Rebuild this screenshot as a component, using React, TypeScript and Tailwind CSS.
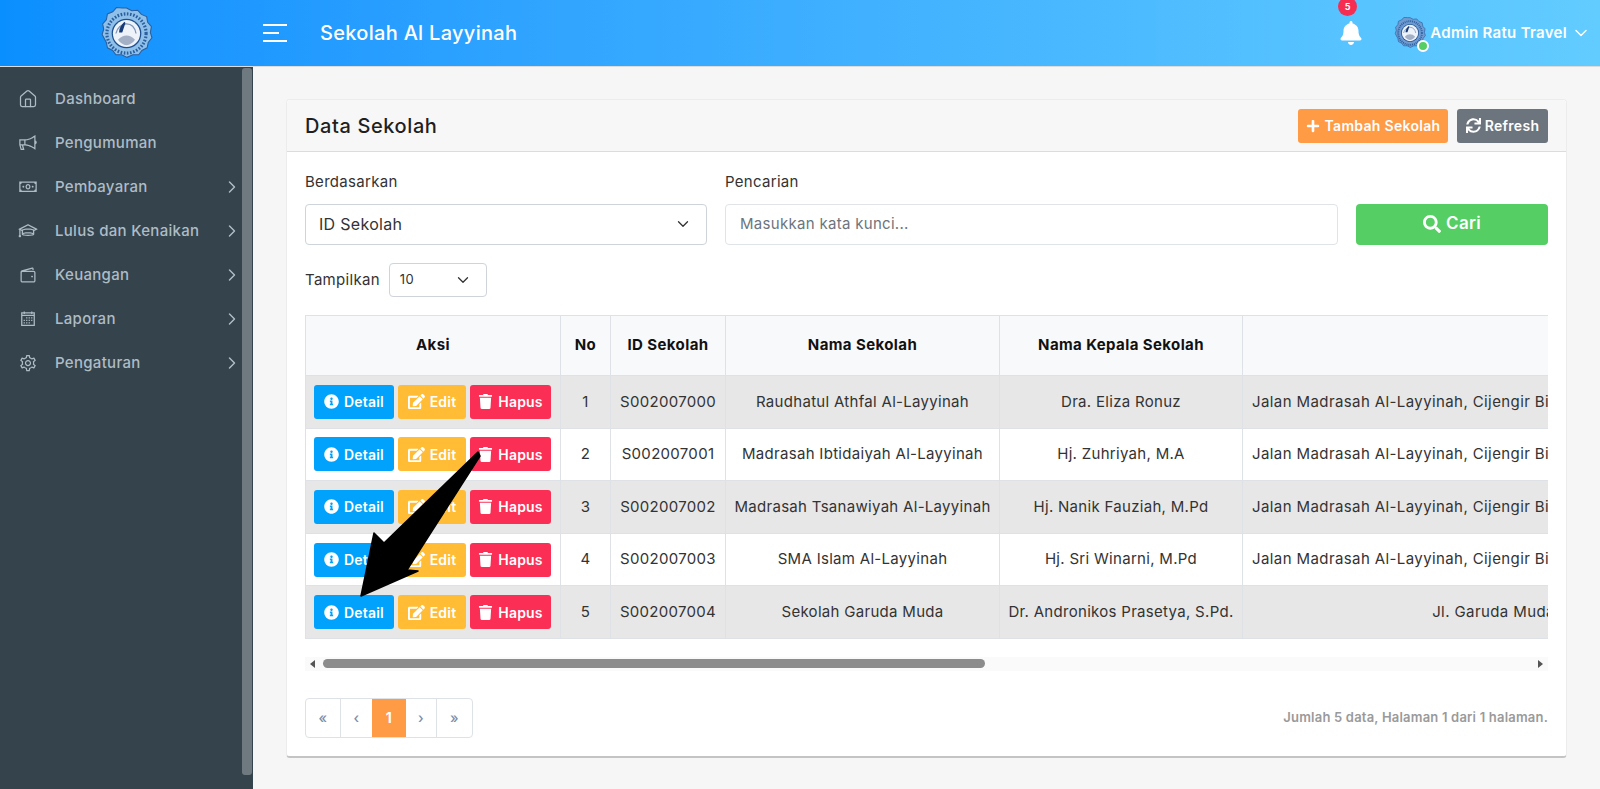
import { Home, ChevronRight, ChevronDown } from "lucide-react";
import { FaBell, FaPlus, FaSync, FaSearch, FaInfoCircle, FaEdit, FaTrash } from "react-icons/fa";
import { LiaBullhornSolid, LiaMoneyBillSolid, LiaGraduationCapSolid, LiaWalletSolid, LiaCalendarAltSolid, LiaCogSolid } from "react-icons/lia";

const menu = [
  { label: "Dashboard", icon: <Home size={20} strokeWidth={1.5} /> },
  { label: "Pengumuman", icon: <LiaBullhornSolid size={22} /> },
  { label: "Pembayaran", icon: <LiaMoneyBillSolid size={22} />, sub: true },
  { label: "Lulus dan Kenaikan", icon: <LiaGraduationCapSolid size={22} />, sub: true },
  { label: "Keuangan", icon: <LiaWalletSolid size={22} />, sub: true },
  { label: "Laporan", icon: <LiaCalendarAltSolid size={22} />, sub: true },
  { label: "Pengaturan", icon: <LiaCogSolid size={22} />, sub: true },
];

const ALAMAT = "Jalan Madrasah Al-Layyinah, Cijengir Bi";

const rows = [
  { no: 1, id: "S002007000", nama: "Raudhatul Athfal Al-Layyinah", kepala: "Dra. Eliza Ronuz", alamat: ALAMAT },
  { no: 2, id: "S002007001", nama: "Madrasah Ibtidaiyah Al-Layyinah", kepala: "Hj. Zuhriyah, M.A", alamat: ALAMAT },
  { no: 3, id: "S002007002", nama: "Madrasah Tsanawiyah Al-Layyinah", kepala: "Hj. Nanik Fauziah, M.Pd", alamat: ALAMAT },
  { no: 4, id: "S002007003", nama: "SMA Islam Al-Layyinah", kepala: "Hj. Sri Winarni, M.Pd", alamat: ALAMAT },
  { no: 5, id: "S002007004", nama: "Sekolah Garuda Muda", kepala: "Dr. Andronikos Prasetya, S.Pd.", alamat: "Jl. Garuda Muda", center: true },
];

// school seal, drawn small so only the rough shapes matter
const Seal = ({ size, edge = "#8fc0ea" }: { size: number; edge?: string }) => (
  <svg width={size} height={size} viewBox="0 0 50 50">
    <path d="M25 1l5 2.500 5.500-.5 3.500 4 5 2 1 5.500 3.500 4-1 5.500 1.500 5-3.500 4.500-1 5-5 2.500-3 4-5.500 0-5.500 2.500-5-2.500-5.500 0-3-4-5-2.500-1-5L2 26l1.500-5-1-5 3.500-4 1-5.500 5-2 3.500-4 5.500.5z" fill={edge} stroke="#2b5f9e" strokeWidth="1" />
    <circle cx="25" cy="25" r="18.500" fill="none" stroke="#2b5f9e" strokeWidth="3" strokeDasharray="1.500 1.500" />
    <circle cx="25" cy="25" r="14" fill="#1f4f8f" />
    <circle cx="25" cy="25" r="12.800" fill="#eef3fa" />
    <path d="M15 25c1-5 5-9 10-9 5 0 8 4 9 9" fill="none" stroke="#7d95b8" strokeWidth="1.200" />
    <path d="M18 24c0-4 2-7 5-10l1 1c-1 3-2 6-3 9z" fill="#173a78" />
    <path d="M17 31c3-3 5-4 8-4s5 1 8 4c-2 3-5 5-8 5s-6-2-8-5z" fill="#a3b0c6" />
  </svg>
);

const Sidebar = () => (
  <aside className="flex h-full w-[253px] shrink-0 bg-[#35434c]">
    <nav className="flex-1 pt-[10px]">
      {menu.map((m) => (
        <div key={m.label} className="flex h-[44px] items-center pl-[18px] pr-0 text-[#aebcc6]">
          <span className="flex w-[20px] shrink-0 justify-center">{m.icon}</span>
          <span className="ml-[17px] flex-1 text-[15px] font-medium">{m.label}</span>
          {m.sub && <ChevronRight size={20} strokeWidth={1.75} />}
        </div>
      ))}
    </nav>
    <div className="mb-[14px] mr-[1px] mt-[1px] w-[10px] rounded-[3px] bg-[#6f7a80]" />
  </aside>
);

const Header = () => (
  <header className="flex h-[67px] shrink-0 items-center border-b border-[#dcdcdc] bg-gradient-to-r from-[#0a8fff] to-[#62ccff]">
    <div className="flex w-[253px] shrink-0 justify-center">
      <Seal size={53} />
    </div>
    <svg width="24" height="18" viewBox="0 0 24 18" className="ml-[10px]">
      <rect x="0" y="0" width="24" height="2" fill="#fff" />
      <rect x="0" y="8" width="16" height="2" fill="#fff" />
      <rect x="0" y="16" width="24" height="2" fill="#fff" />
    </svg>
    <h1 className="ml-[33px] flex-1 text-[20px] font-medium text-white">Sekolah Al Layyinah</h1>
    <div className="relative mr-[31px] text-white">
      <FaBell size={24} />
      <span className="absolute -left-[1px] -top-[24px] flex h-[19px] w-[19px] items-center justify-center rounded-full bg-[#f62d51] text-[9px] font-bold">5</span>
    </div>
    <div className="relative">
      <Seal size={32} edge="#6f9bd1" />
      <span className="absolute bottom-[-3px] right-[-3px] h-[12px] w-[12px] rounded-full border-2 border-white bg-[#55ce63]" />
    </div>
    <span className="ml-[4px] text-[15px] font-semibold text-white">Admin Ratu Travel</span>
    <ChevronDown size={20} strokeWidth={1.75} className="ml-[4px] mr-[9px] text-white" />
  </header>
);

const ActionBtn = ({ color, icon, label, width }: { color: string; icon: React.ReactNode; label: string; width: string }) => (
  <span className={`flex h-[34px] items-center justify-center gap-[5px] rounded-[3px] text-[14px] font-semibold text-white ${color} ${width}`}>
    {icon}
    {label}
  </span>
);

const Table = () => (
  <div className="mt-[18px] overflow-hidden">
    <table className="w-[1439px] table-fixed border-collapse text-[15px] tracking-[0.3px] text-[#333]">
      <colgroup>
        <col className="w-[255px]" />
        <col className="w-[50px]" />
        <col className="w-[115px]" />
        <col className="w-[274px]" />
        <col className="w-[243px]" />
        <col className="w-[502px]" />
      </colgroup>
      <thead>
        <tr className="h-[60px] bg-[#f8f9fb] font-bold tracking-[0.4px] text-[#111]">
          {["Aksi", "No", "ID Sekolah", "Nama Sekolah", "Nama Kepala Sekolah", ""].map((h) => (
            <th key={h} className="border border-[#dee2e6]">{h}</th>
          ))}
        </tr>
      </thead>
      <tbody>
        {rows.map((r) => (
          <tr key={r.no} className={`h-[52.6px] ${r.no % 2 ? "bg-[#e7e7e7]" : "bg-white"}`}>
            <td className="border border-[#dee2e6] px-[8px]">
              <div className="flex gap-[4px] tracking-[0.2px]">
                <ActionBtn color="bg-[#00a2fc]" width="w-[80px]" label="Detail" icon={<FaInfoCircle size={15} />} />
                <ActionBtn color="bg-[#ffbc34]" width="w-[68px]" label="Edit" icon={<FaEdit size={17} />} />
                <ActionBtn color="bg-[#fb2e55]" width="w-[81px]" label="Hapus" icon={<FaTrash size={15} />} />
              </div>
            </td>
            <td className="border border-[#dee2e6] text-center">{r.no}</td>
            <td className="border border-[#dee2e6] text-center">{r.id}</td>
            <td className="border border-[#dee2e6] text-center">{r.nama}</td>
            <td className="border border-[#dee2e6] text-center">{r.kepala}</td>
            <td className={`border border-[#dee2e6] px-[9px] whitespace-nowrap tracking-[0.4px] ${r.center ? "text-center" : "text-left"}`}>{r.alamat}</td>
          </tr>
        ))}
      </tbody>
    </table>
  </div>
);

const ScrollBar = () => (
  <div className="mt-[18px] flex h-[14px] items-center bg-[#fafafa] px-[5px]">
    <span className="h-0 w-0 border-y-[4px] border-r-[5px] border-y-transparent border-r-[#555]" />
    <div className="ml-[8px] flex-1">
      <div className="h-[9px] w-[662px] rounded-full bg-[#8c8c8c]" />
    </div>
    <span className="h-0 w-0 border-y-[4px] border-l-[5px] border-y-transparent border-l-[#555]" />
  </div>
);

const Pager = () => (
  <div className="mt-[27px] flex items-center justify-between">
    <div className="flex h-[40px] overflow-hidden rounded-[4px] border border-[#dee2e6] text-[14px] font-medium text-[#7a8ea6]">
      <span className="flex w-[35px] items-center justify-center border-r border-[#dee2e6]">«</span>
      <span className="flex w-[31px] items-center justify-center">‹</span>
      <span className="flex w-[34px] items-center justify-center bg-[#ff9b44] font-bold text-white">1</span>
      <span className="flex w-[31px] items-center justify-center border-r border-[#dee2e6]">›</span>
      <span className="flex w-[35px] items-center justify-center">»</span>
    </div>
    <span className="text-[13px] font-semibold tracking-[0.2px] text-[#9a9a9a]">Jumlah 5 data, Halaman 1 dari 1 halaman.</span>
  </div>
);

const Card = () => (
  <section className="rounded-[4px] border border-b-2 border-[#ececec] border-b-[#c4c4c4] bg-white">
    <div className="flex h-[52px] items-center justify-between rounded-t-[4px] border-b border-[#dcdcdc] bg-[#f7f7f7] px-[18px]">
      <h2 className="text-[20px] font-medium tracking-[0.6px] text-[#1f1f1f]">Data Sekolah</h2>
      <div className="flex gap-[9px]">
        <button className="flex h-[34px] w-[150px] items-center justify-center gap-[5px] rounded-[3px] bg-[#ff9b44] text-[14px] font-semibold text-white">
          <FaPlus size={14} /> Tambah Sekolah
        </button>
        <button className="flex h-[34px] w-[91px] items-center justify-center gap-[4px] rounded-[3px] bg-[#6c757d] text-[14px] font-semibold text-white">
          <FaSync size={15} /> Refresh
        </button>
      </div>
    </div>
    <div className="px-[18px] pb-[18px] pt-[19px]">
      <div className="flex gap-[18px]">
        <div className="w-[402px]">
          <label className="block h-[33px] text-[15px] text-[#333]">Berdasarkan</label>
          <div className="flex h-[41px] items-center justify-between rounded-[4px] border border-[#ced4da] pb-[2px] pl-[13px] pr-[14px] text-[16px] text-[#333]">
            ID Sekolah
            <ChevronDown size={18} strokeWidth={1.75} />
          </div>
        </div>
        <div className="w-[613px]">
          <label className="block h-[33px] text-[15px] text-[#333]">Pencarian</label>
          <div className="flex h-[41px] items-center rounded-[4px] border border-[#e0e4e8] px-[14px] text-[15px] text-[#6c757d]">
            Masukkan kata kunci...
          </div>
        </div>
        <button className="mt-[33px] flex h-[41px] flex-1 items-center justify-center gap-[5px] rounded-[4px] bg-[#55ce63] pb-[1px] text-[17px] font-semibold text-white">
          <FaSearch size={18} /> Cari
        </button>
      </div>
      <div className="mt-[18px] flex items-center gap-[9px]">
        <span className="text-[15px] text-[#333]">Tampilkan</span>
        <div className="flex h-[34px] w-[98px] items-center justify-between rounded-[4px] border border-[#ced4da] pl-[10px] pr-[14px] text-[13px] text-[#333]">
          10
          <ChevronDown size={18} strokeWidth={1.75} />
        </div>
      </div>
      <Table />
      <ScrollBar />
      <Pager />
    </div>
  </section>
);

export default function App() {
  return (
    <div className="relative flex h-[789px] flex-col overflow-hidden bg-[#f6f6f6] font-['Inter',sans-serif] tracking-[0.3px]">
      <Header />
      <div className="flex min-h-0 flex-1">
        <Sidebar />
        <main className="min-w-0 flex-1 px-[33px] pt-[32px]">
          <Card />
        </main>
      </div>
      {/* annotation arrow laid over the table */}
      <svg className="absolute left-0 top-0" width="1600" height="789" viewBox="0 0 1600 789">
        <path d="M361 596L374 533L384 543L478 452L480 456L407 570L418 571Z" fill="#000" stroke="#000" strokeWidth="1.500" strokeLinejoin="round" />
      </svg>
    </div>
  );
}
